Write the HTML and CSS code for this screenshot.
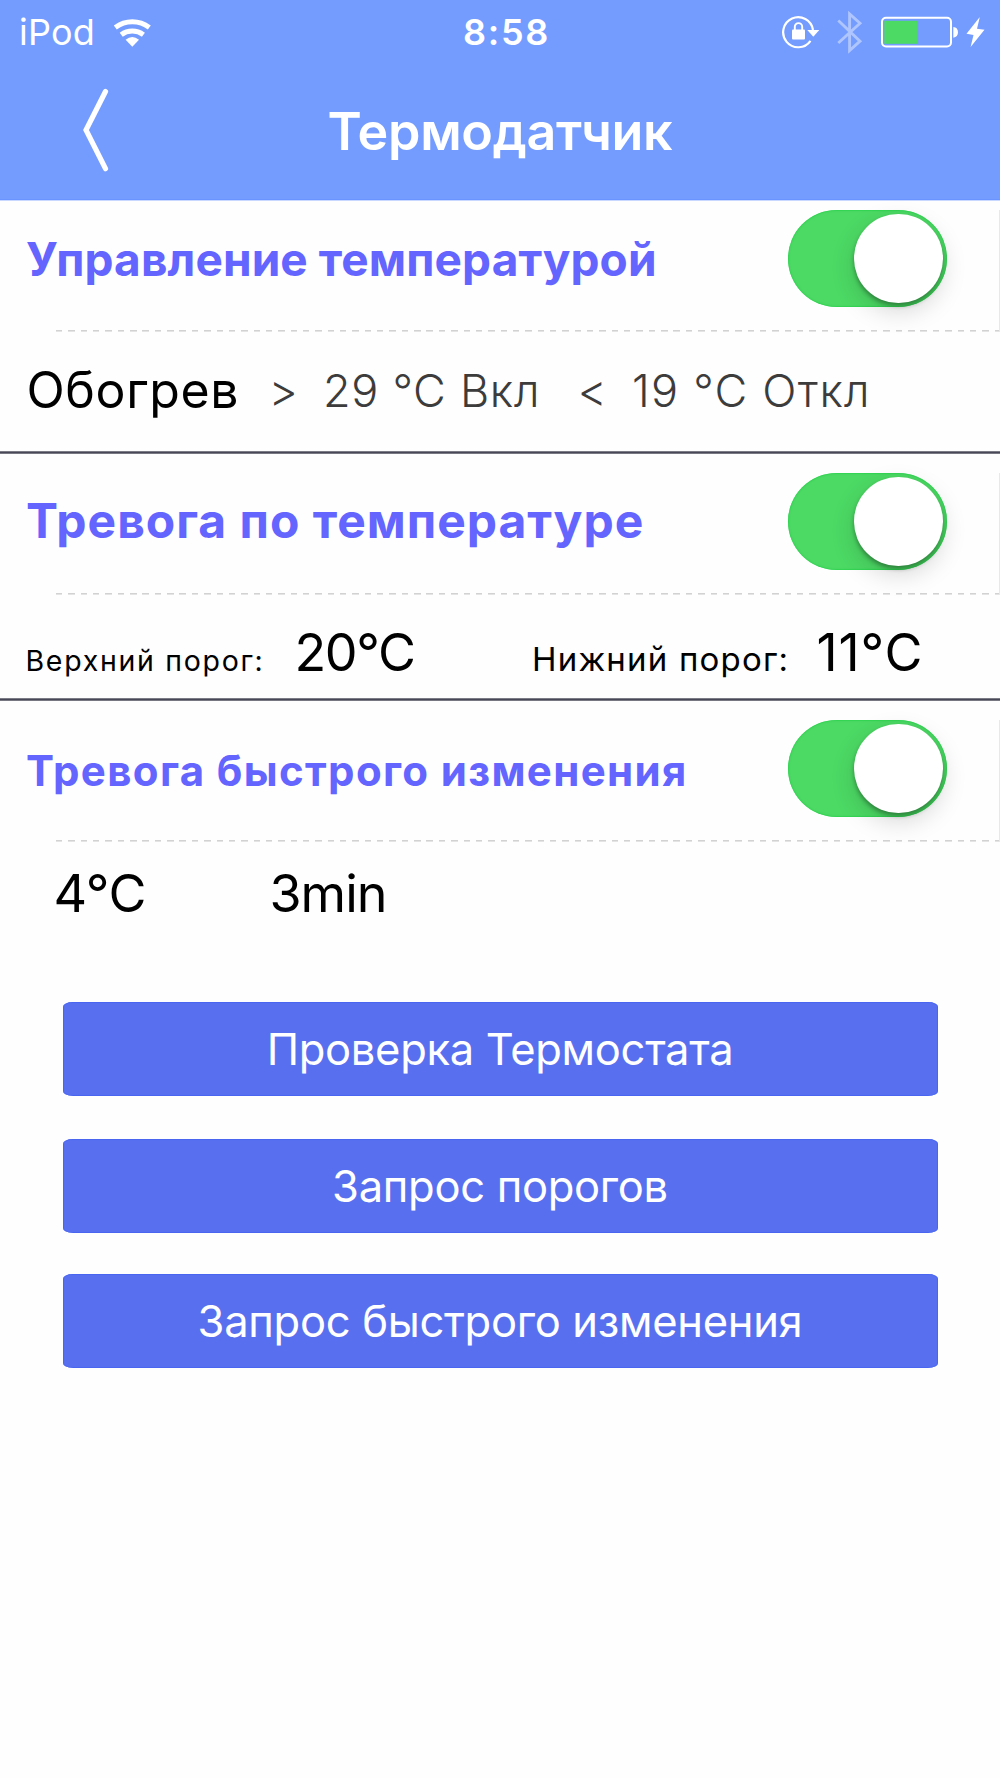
FILE: index.html
```
<!DOCTYPE html>
<html lang="ru">
<head>
  <meta charset="UTF-8">
  <title>Термодатчик</title>
  <meta name="viewport" content="width=device-width, initial-scale=1" />
  <link rel="stylesheet" href="styles.css">
</head>
<body>

  <header class="header">
    <!-- Status bar -->
    <div class="status-bar">
      <div class="status-left">
        <span class="device">iPod</span>
        <svg class="icon-wifi" width="40" height="32" viewBox="112 15 40 32">
          <path d="M115.3 26.4a28.5 28.5 0 0 1 34 0" fill="none" stroke="#fff" stroke-width="5" />
          <path d="M121.2 33.8a18.5 18.5 0 0 1 22.2 0" fill="none" stroke="#fff" stroke-width="5" />
          <path d="M125.6 38.8q6.7-5.4 13.4 0l-6.7 6.9z" fill="#fff" />
        </svg>
      </div>
      <span class="clock">8:58</span>
      <div class="status-right">
        <svg width="38" height="36" viewBox="782 14 38 36">
          <path d="M810.5 40.8A15 15 0 1 1 813 30" fill="none" stroke="#fff" stroke-width="2.2" />
          <path d="M807.3 30h12l-6 6.8z" fill="#fff" />
          <rect x="792" y="29.5" width="13" height="10" rx="1" fill="#fff" />
          <path d="M794.8 30v-3.2a3.7 3.7 0 0 1 7.4 0V30" fill="none" stroke="#fff" stroke-width="1.9" />
        </svg>
        <svg class="icon-bluetooth" width="26" height="44" viewBox="837 10 26 44">
          <path d="M838.3 20.5L860 41.2 849.6 50.5V14L860 23.2 838.3 43" fill="none" stroke="#fff" stroke-width="2.9" />
        </svg>
        <svg class="icon-battery" width="78" height="34" viewBox="880 15 78 34">
          <rect x="882" y="17.7" width="69" height="28.8" rx="4" fill="none" stroke="#fff" stroke-width="2" />
          <rect x="884.3" y="20.8" width="33.3" height="23" fill="#4cd964" />
          <path d="M953.3 27q4.7.5 4.7 5.3t-4.7 5.4z" fill="#fff" />
        </svg>
        <svg class="icon-bolt" width="20" height="34" viewBox="966 14 20 34">
          <path d="M979.8 16L977 27.7l7.5 1L970.6 46l2.9-12-7-1.2z" fill="#fff" />
        </svg>
      </div>
    </div>

    <!-- Title bar -->
    <div class="nav-bar">
      <a class="back" href="#" aria-label="Назад">
        <svg width="28" height="86" viewBox="82 87 28 86">
          <path d="M105.5 91.5L86 130l19.5 38.7" fill="none" stroke="#fff" stroke-width="5.2" stroke-linecap="round" />
        </svg>
      </a>
      <h1>Термодатчик</h1>
    </div>
  </header>

  <main>
    <section class="block block-control">
      <div class="block-head">
        <h2>Управление температурой</h2>
        <div class="switch"><span class="knob"></span></div>
      </div>
      <div class="row row-mode">
        <span class="mode">Обогрев</span>
        <span class="limit">&gt;</span>
        <span class="limit">29 °C Вкл</span>
        <span class="limit">&lt;</span>
        <span class="limit limit-off">19 °C Откл</span>
      </div>
    </section>

    <section class="block block-alarm">
      <div class="block-head">
        <h2>Тревога по температуре</h2>
        <div class="switch"><span class="knob"></span></div>
      </div>
      <div class="row row-threshold">
        <span class="label-high">Верхний порог:</span>
        <span class="value value-high">20°C</span>
        <span class="label-low">Нижний порог:</span>
        <span class="value value-low">11°C</span>
      </div>
    </section>

    <section class="block block-change">
      <div class="block-head">
        <h2>Тревога быстрого изменения</h2>
        <div class="switch"><span class="knob"></span></div>
      </div>
      <div class="row row-change">
        <span class="value">4°C</span>
        <span class="value value-time">3min</span>
      </div>
    </section>

    <div class="actions">
      <button type="button">Проверка Термостата</button>
      <button type="button">Запрос порогов</button>
      <button type="button">Запрос быстрого изменения</button>
    </div>
  </main>

</body>
</html>
```
FILE: styles.css
```
* {
  box-sizing: border-box;
}

body {
  margin: 0;
  min-height: 1778px;
  background: #fefefe;
  color: #000;
  font-family: Inter, sans-serif;
}

h1, h2 {
  margin: 0;
}

svg {
  display: block;
  flex: none;
}

/* Header */
.header {
  height: 200px;
  border-bottom: 1px solid #6a94ff;
  box-shadow: 0 1px 0 #c8d8ff;
  background: #749cff;
  color: #fff;
}

.status-bar {
  display: grid;
  grid-template-columns: 1fr auto 1fr;
  align-items: center;
  height: 64px;
  padding: 0 14px 0 19px;
  font-size: 36px;
  line-height: 65px;
}

.status-left {
  display: flex;
  align-items: center;
}

.device {
  width: 93px;
  letter-spacing: 0.2px;
}

.icon-wifi {
  margin-top: -2px;
}

.clock {
  font-weight: 600;
  letter-spacing: 1.75px;
  margin-left: 8px;
}

.status-right {
  display: flex;
  align-items: center;
  justify-content: flex-end;
  margin-top: -2px;
}

.icon-bluetooth {
  margin-left: 17px;
  opacity: 0.42;
}

.icon-battery {
  margin-left: 17px;
}

.icon-bolt {
  margin-left: 8px;
}

.nav-bar {
  display: grid;
  grid-template-columns: 200px 1fr 200px;
  align-items: center;
  height: 135px;
}

.back {
  margin: -4px 0 0 82px;
}

.nav-bar h1 {
  text-align: center;
  font-size: 52px;
  font-weight: 600;
  line-height: 62px;
  letter-spacing: -0.3px;
}

/* Sections */
.block {
  padding-top: 19px;
  background: linear-gradient(#9a9aa0, #474757 45%, #474757 60%, #9a9aa0) bottom / 100% 3px no-repeat;
}

.block-control {
  height: 254px;
  padding-top: 10px;
}

.block-alarm {
  height: 247px;
}

.block-change {
  height: 300.5px;
  background: none;
}

.block-head {
  display: flex;
  justify-content: space-between;
  align-items: flex-start;
  height: 122px;
  padding: 0 52.5px 0 26px;
  border-right: 1px solid #e8e8e8;
  background: repeating-linear-gradient(90deg, #d2d2d2 0 6.4px, transparent 6.4px 12.35px) 55.5px 120px / 1000px 1.6px no-repeat;
}

.block-head h2 {
  font-size: 46px;
  line-height: 99px;
  letter-spacing: 0.1px;
  color: #6464ff;
  white-space: nowrap;
}

.block-alarm h2 {
  font-size: 48px;
  line-height: 96px;
  letter-spacing: 1px;
}

.block-change h2 {
  margin-top: 1px;
  font-size: 42px;
  letter-spacing: 1.35px;
}

/* Switch */
.switch {
  display: flex;
  justify-content: flex-end;
  align-items: center;
  width: 159px;
  height: 97px;
  padding-right: 4px;
  border-radius: 49px;
  background: #4cd964;
  box-shadow: inset 0 0 1.5px 0.5px #1fcf45;
}

.knob {
  width: 88.5px;
  height: 88.5px;
  border-radius: 50%;
  background: #fff;
  box-shadow: 0 9px 24px rgba(0, 0, 0, 0.15), 0 3px 4px rgba(0, 0, 0, 0.32);
}

/* Rows with values */
.row {
  display: grid;
  line-height: 1;
  white-space: nowrap;
}

.row-mode {
  grid-template-columns: 242px 54.5px 254.5px 54.5px auto;
  align-items: center;
  padding: 33px 0 0 26.5px;
}

.mode {
  font-size: 50px;
  letter-spacing: 0.6px;
}

.limit {
  font-size: 45px;
  font-weight: 300;
  letter-spacing: 0.7px;
  color: #3c3c3c;
}

.limit-off {
  letter-spacing: 1.25px;
}

.row-threshold {
  grid-template-columns: 269px 237.5px 284.5px auto;
  align-items: baseline;
  padding: 32px 0 0 25.5px;
}

.label-high {
  font-size: 28.5px;
  letter-spacing: 1.7px;
}

.label-low {
  font-size: 33px;
  letter-spacing: 1.2px;
}

.value {
  font-size: 52px;
  letter-spacing: -0.4px;
}

.value-high {
  letter-spacing: -1.37px;
}

.value-low {
  letter-spacing: 0.86px;
}

.value-time {
  letter-spacing: -1px;
}

.row-change {
  grid-template-columns: 216px auto;
  padding: 26px 0 0 53.5px;
}

/* Buttons */
.actions {
  display: flex;
  flex-direction: column;
  gap: 43px;
  padding: 0 62.5px;
}

.actions button {
  height: 94px;
  padding: 0;
  border: none;
  border-radius: 10px / 5px;
  background: #5870f0;
  box-shadow: inset 0 0 1px 0.5px #3c5cf0;
  color: #fff;
  font-family: inherit;
  font-size: 43.5px;
  letter-spacing: -0.3px;
}

.actions button:last-child {
  margin-top: -2px;
}
```
